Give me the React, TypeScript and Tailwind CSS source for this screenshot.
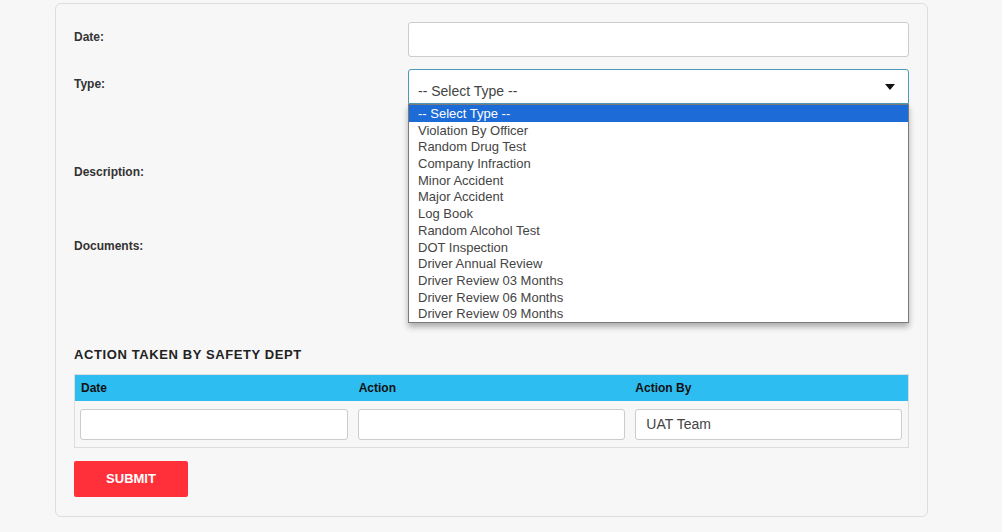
import { useState } from 'react'

const types = [
  '-- Select Type --',
  'Violation By Officer',
  'Random Drug Test',
  'Company Infraction',
  'Minor Accident',
  'Major Accident',
  'Log Book',
  'Random Alcohol Test',
  'DOT Inspection',
  'Driver Annual Review',
  'Driver Review 03 Months',
  'Driver Review 06 Months',
  'Driver Review 09 Months',
]

export default function App() {
  const [selected] = useState(0)

  return (
    <div className="min-h-[532px] bg-[#f7f7f7] font-['Liberation_Sans',Arial,sans-serif] text-[#333]">
      <div className="pl-[55px] pr-[74px] pt-[3px]">
        <div className="rounded-[6px] border border-[#dddddd] bg-[#f7f7f7] px-[18px] pt-[18px] pb-[19px]">
          {/* Date */}
          <div className="flex h-[35px]">
            <label className="w-[334px] pt-[8px] text-[12px] leading-[14px] font-bold">Date:</label>
            <input className="h-[35px] flex-1 rounded-[3px] border border-[#cccccc] bg-white px-[9px] outline-none" />
          </div>

          {/* Type */}
          <div className="mt-[12px] flex h-[76px]">
            <label className="w-[334px] pt-[8px] text-[12px] leading-[14px] font-bold">Type:</label>
            <div className="relative flex-1">
              <div className="flex h-[35px] items-center justify-between rounded-t-[3px] border border-[#4b9bb7] bg-white pt-[10px] pr-[13px] pl-[9px] text-[14px] text-[#444]">
                <span>-- Select Type --</span>
                <svg width="10" height="6" viewBox="0 0 10 6" className="-mt-[9px]">
                  <path d="M0 0h10L5 6z" fill="#111" />
                </svg>
              </div>
              <ul className="absolute top-[35px] left-0 z-10 w-full border border-[#7a7a7a] bg-white shadow-[0_4px_6px_rgba(0,0,0,0.3)]">
                {types.map((t, i) => (
                  <li
                    key={t}
                    className={
                      i === selected
                        ? 'h-[16.7px] bg-[#1c6bd6] pt-[1px] pl-[9px] text-[13px] leading-[16px] text-white'
                        : 'h-[16.7px] pt-[1px] pl-[9px] text-[13px] leading-[16px] text-[#444]'
                    }
                  >
                    {t}
                  </li>
                ))}
              </ul>
            </div>
          </div>

          {/* Description */}
          <div className="mt-[12px] flex h-[62px]">
            <label className="w-[334px] pt-[8px] text-[12px] leading-[14px] font-bold">Description:</label>
            <textarea className="h-[62px] flex-1 resize-none rounded-[3px] border border-[#cccccc] bg-white" />
          </div>

          {/* Documents */}
          <div className="mt-[12px] flex h-[80px]">
            <label className="w-[334px] pt-[8px] text-[12px] leading-[14px] font-bold">Documents:</label>
            <div className="flex-1" />
          </div>

          <h3 className="mt-[36px] text-[13px] leading-[16px] font-bold tracking-[0.6px] text-[#222]">
            ACTION TAKEN BY SAFETY DEPT
          </h3>

          <div className="mt-[11px] border border-[#dddddd]">
            <div className="grid h-[26px] grid-cols-3 items-center bg-[#2ebdf1] text-[12px] font-bold text-[#111]">
              <div className="pl-[6px]">Date</div>
              <div className="pl-[6px]">Action</div>
              <div className="pl-[5px]">Action By</div>
            </div>
            <div className="grid h-[46px] grid-cols-3 items-center">
              <div className="pr-[5px] pl-[5px]">
                <input className="h-[31px] w-full rounded-[3px] border border-[#cccccc] bg-white px-[10px] text-[14px] outline-none" />
              </div>
              <div className="pr-[5px] pl-[5px]">
                <input className="h-[31px] w-full rounded-[3px] border border-[#cccccc] bg-white px-[10px] text-[14px] outline-none" />
              </div>
              <div className="pr-[6px] pl-[5px]">
                <input
                  defaultValue="UAT Team"
                  className="h-[31px] w-full rounded-[3px] border border-[#cccccc] bg-white px-[10px] text-[14px] text-[#444] outline-none"
                />
              </div>
            </div>
          </div>

          <button className="mt-[13px] h-[36px] w-[114px] rounded-[2px] bg-[#ff303a] text-[13px] font-bold text-white">
            SUBMIT
          </button>
        </div>
      </div>
    </div>
  )
}
